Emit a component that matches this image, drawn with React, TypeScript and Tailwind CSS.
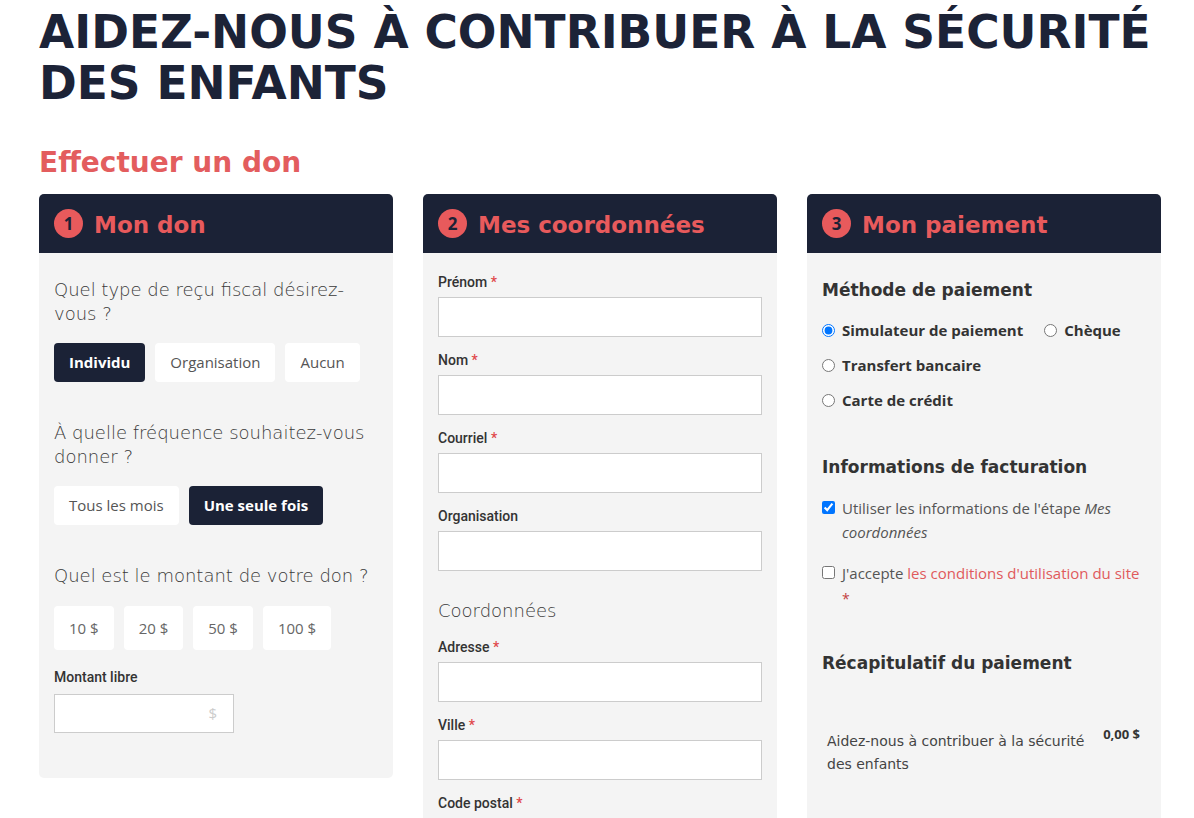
import React from "react";

function Header({ n, title }: { n: number; title: string }) {
  return (
    <div className="h-[59px] bg-[#1b2236] rounded-t-[5px] flex items-center pl-[15px] gap-[11px]">
      <span className="w-[29px] h-[29px] rounded-full bg-[#e85a5c] flex items-center justify-center text-[#1b2236] font-['Open_Sans',sans-serif] font-bold text-[17px] leading-none">
        {n}
      </span>
      <span className="pt-[3px] font-['DejaVu_Sans',sans-serif] font-bold text-[23px] text-[#e85a5c] leading-none">
        {title}
      </span>
    </div>
  );
}

function Btn({ label, active }: { label: string; active?: boolean }) {
  return (
    <div
      className={
        active
          ? "h-[39px] px-[15px] rounded-[4px] bg-[#1b2236] text-white font-bold flex items-center font-['Open_Sans',sans-serif] text-[15px]"
          : "h-[39px] px-[15px] rounded-[4px] bg-white text-[#555555] flex items-center font-['Open_Sans',sans-serif] text-[15px]"
      }
    >
      {label}
    </div>
  );
}

function Amount({ label }: { label: string }) {
  return (
    <div className="h-[44px] px-[15px] rounded-[4px] bg-white text-[#666666] flex items-center font-['Open_Sans',sans-serif] text-[15px]">
      {label}
    </div>
  );
}

function Question({ children }: { children: React.ReactNode }) {
  return (
    <div className="font-['DejaVu_Sans',sans-serif] font-extralight text-[18px] leading-[24px] text-[#3a3a3a]">
      {children}
    </div>
  );
}

function Field({ label, required }: { label: string; required?: boolean }) {
  return (
    <div>
      <div className="font-['Roboto',sans-serif] font-medium text-[14px] leading-[18px] text-[#333333]">
        {label}
        {required && <span className="text-[#e0474a]"> *</span>}
      </div>
      <div className="mt-[6px] h-[40px] w-[324px] bg-white border border-[#cccccc]" />
    </div>
  );
}

function Radio({ label, checked }: { label: string; checked?: boolean }) {
  return (
    <label className="flex items-center gap-[7px] font-['Open_Sans',sans-serif] font-bold text-[15px] leading-[24px] text-[#333333]">
      <input type="radio" name="pay" defaultChecked={checked} className="m-0 w-[13px] h-[13px]" />
      {label}
    </label>
  );
}

function SubHeading({ children }: { children: React.ReactNode }) {
  return (
    <div className="font-['DejaVu_Sans',sans-serif] font-bold text-[17px] leading-[24px] text-[#333333]">
      {children}
    </div>
  );
}

export default function App() {
  return (
    <div className="w-[1194px] h-[818px] overflow-hidden bg-white pl-[39px]">
      <h1 className="pt-[7px] font-['DejaVu_Sans',sans-serif] font-bold text-[45.5px] leading-[51px] text-[#1c2337]">
        AIDEZ-NOUS À CONTRIBUER À LA SÉCURITÉ
        <br />
        DES ENFANTS
      </h1>
      <h2 className="mt-[37px] font-['DejaVu_Sans',sans-serif] font-bold text-[28px] leading-[34px] text-[#e35d5e]">
        Effectuer un don
      </h2>

      <div className="mt-[14px] flex items-start gap-[30px]">
        {/* Column 1 */}
        <div className="w-[354px] rounded-[5px] bg-[#f4f4f4]">
          <Header n={1} title="Mon don" />
          <div className="px-[15px] pt-[25px] pb-[45px]">
            <Question>
              Quel type de reçu fiscal désirez-
              <br />
              vous ?
            </Question>
            <div className="mt-[17px] flex gap-[10px]">
              <Btn label="Individu" active />
              <Btn label="Organisation" />
              <Btn label="Aucun" />
            </div>
            <div className="mt-[39px]">
              <Question>
                À quelle fréquence souhaitez-vous
                <br />
                donner ?
              </Question>
            </div>
            <div className="mt-[17px] flex gap-[10px]">
              <Btn label="Tous les mois" />
              <Btn label="Une seule fois" active />
            </div>
            <div className="mt-[39px]">
              <Question>Quel est le montant de votre don ?</Question>
            </div>
            <div className="mt-[18px] flex gap-[10px]">
              <Amount label="10 $" />
              <Amount label="20 $" />
              <Amount label="50 $" />
              <Amount label="100 $" />
            </div>
            <div className="mt-[18px] font-['Roboto',sans-serif] font-medium text-[14px] leading-[18px] text-[#333333]">
              Montant libre
            </div>
            <div className="mt-[8px] h-[39px] w-[180px] bg-white border border-[#cccccc] flex items-center justify-end pr-[16px] font-['Open_Sans',sans-serif] text-[15px] text-[#cccccc]">
              $
            </div>
          </div>
        </div>

        {/* Column 2 */}
        <div className="w-[354px] rounded-[5px] bg-[#f4f4f4]">
          <Header n={2} title="Mes coordonnées" />
          <div className="px-[15px] pt-[20px] pb-[40px] flex flex-col">
            <Field label="Prénom" required />
            <div className="mt-[14px]">
              <Field label="Nom" required />
            </div>
            <div className="mt-[14px]">
              <Field label="Courriel" required />
            </div>
            <div className="mt-[14px]">
              <Field label="Organisation" />
            </div>
            <div className="mt-[28px]">
              <Question>Coordonnées</Question>
            </div>
            <div className="mt-[15px]">
              <Field label="Adresse" required />
            </div>
            <div className="mt-[14px]">
              <Field label="Ville" required />
            </div>
            <div className="mt-[14px]">
              <Field label="Code postal" required />
            </div>
          </div>
        </div>

        {/* Column 3 */}
        <div className="w-[354px] rounded-[5px] bg-[#f4f4f4]">
          <Header n={3} title="Mon paiement" />
          <div className="px-[15px] pt-[25px] pb-[60px]">
            <SubHeading>Méthode de paiement</SubHeading>
            <div className="mt-[16px] flex gap-[21px]">
              <Radio label="Simulateur de paiement" checked />
              <Radio label="Chèque" />
            </div>
            <div className="mt-[11px]">
              <Radio label="Transfert bancaire" />
            </div>
            <div className="mt-[11px]">
              <Radio label="Carte de crédit" />
            </div>

            <div className="mt-[43px]">
              <SubHeading>Informations de facturation</SubHeading>
            </div>
            <label className="mt-[17px] flex items-start gap-[7px] font-['Open_Sans',sans-serif] text-[15px] leading-[24px] text-[#555555]">
              <input type="checkbox" defaultChecked className="m-0 mt-[5px] w-[13px] h-[13px] shrink-0" />
              <span>
                Utiliser les informations de l'étape <i>Mes</i>
                <br />
                <i>coordonnées</i>
              </span>
            </label>
            <label className="mt-[17px] flex items-start gap-[7px] font-['Open_Sans',sans-serif] text-[15px] leading-[24px] text-[#555555]">
              <input type="checkbox" className="m-0 mt-[5px] w-[13px] h-[13px] shrink-0" />
              <span>
                J'accepte <span className="text-[#e05a5c]">les conditions d'utilisation du site</span>
                <br />
                <span className="text-[#c2403f] text-[14px] leading-[28px]">*</span>
              </span>
            </label>

            <div className="mt-[38px]">
              <SubHeading>Récapitulatif du paiement</SubHeading>
            </div>
            <div className="mt-[50px] flex items-start">
              <div className="pl-[5px] pt-[5px] font-['DejaVu_Sans',sans-serif] text-[14px] leading-[23px] text-[#444444]">
                Aidez-nous à contribuer à la sécurité
                <br />
                des enfants
              </div>
              <div className="ml-auto pr-[6px] font-['Open_Sans',sans-serif] font-bold text-[13px] leading-[18px] text-[#333333]">
                0,00 $
              </div>
            </div>
          </div>
        </div>
      </div>
    </div>
  );
}
